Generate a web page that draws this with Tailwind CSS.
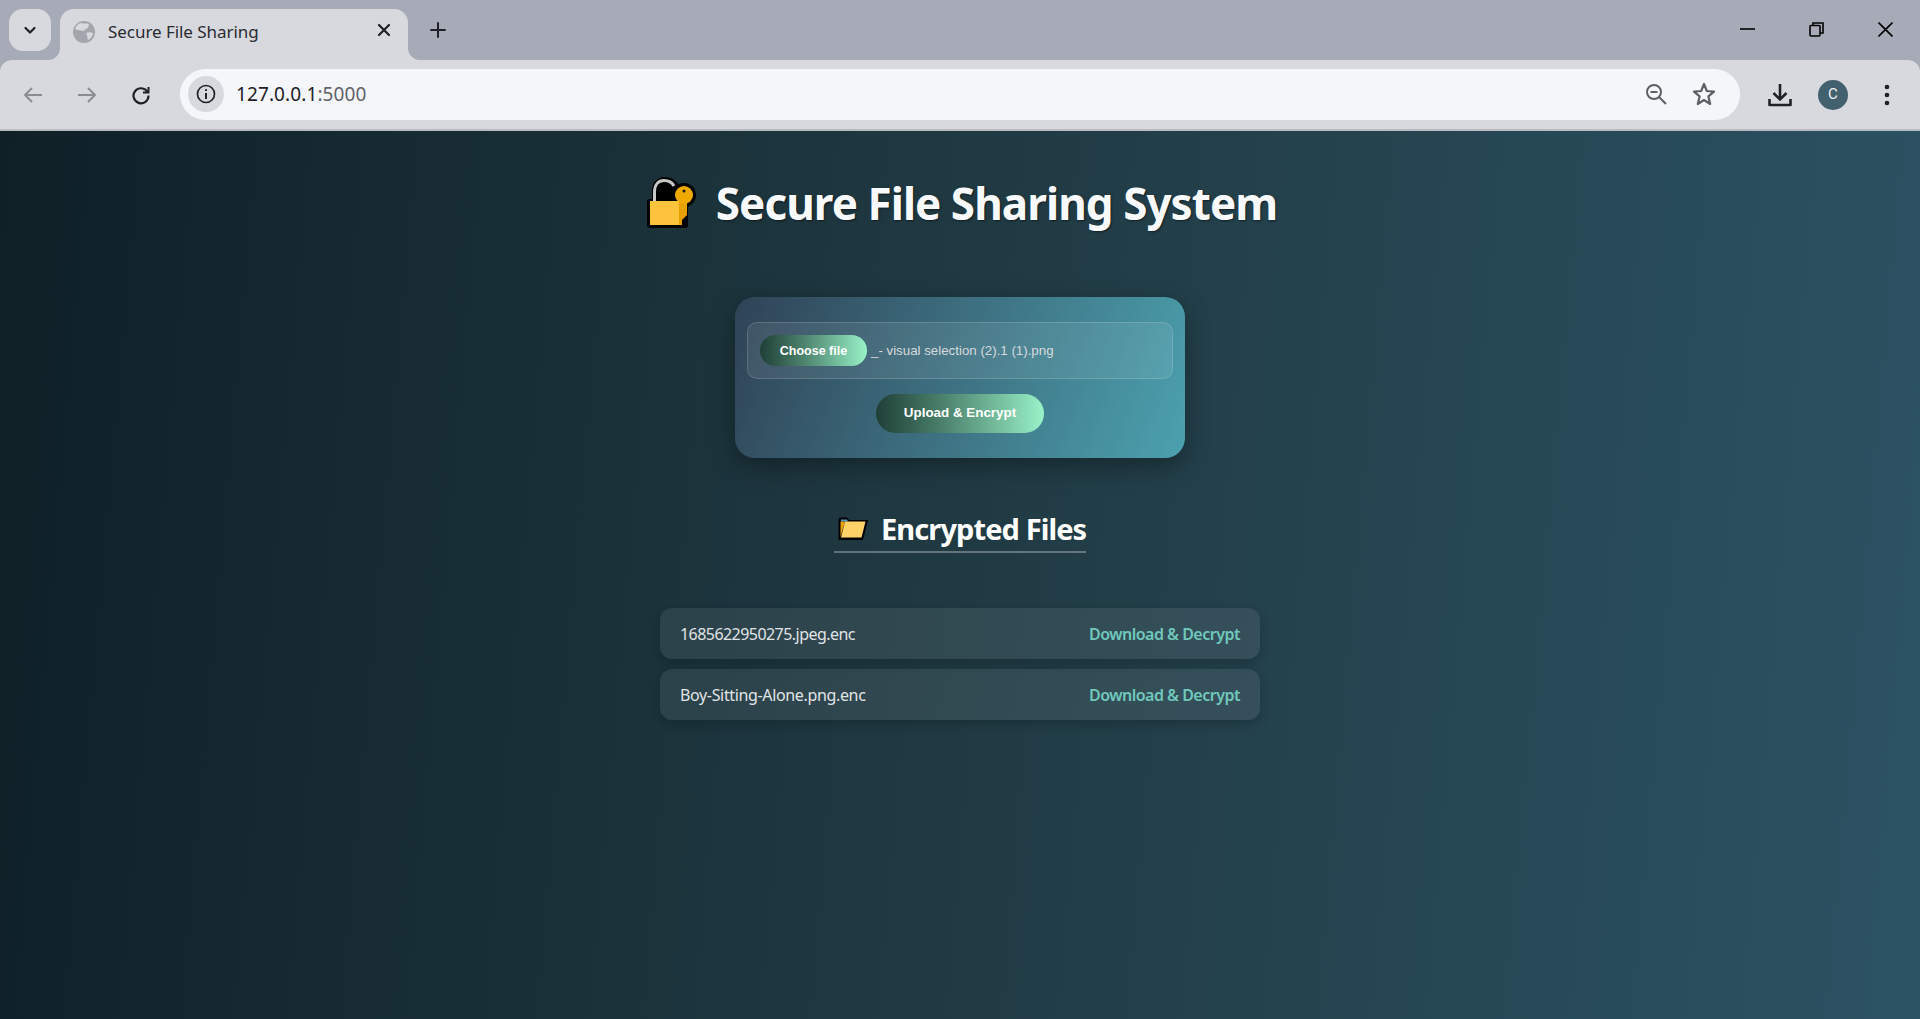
<!DOCTYPE html>
<html lang="en">
<head>
<meta charset="UTF-8">
<title>Secure File Sharing</title>
<script src="https://cdn.jsdelivr.net/npm/@tailwindcss/browser@4"></script>
</head>
<body class="h-[1019px] w-[1920px] overflow-hidden flex flex-col font-['Noto_Sans',sans-serif]">

<!-- TAB STRIP -->
<div class="h-[60px] bg-[#a7abb7] flex items-start pt-[9px] pl-[9px] relative">
  <div class="w-[42px] h-[42px] rounded-[14px] bg-[#d8d9de] flex items-center justify-center">
    <svg width="16" height="16" viewBox="0 0 16 16" fill="none" stroke="#1f2126" stroke-width="2.2" stroke-linecap="round" stroke-linejoin="round"><path d="M3.5 6 L8 10.5 L12.5 6"/></svg>
  </div>
  <div class="relative ml-[9px] w-[348px] h-[51px] bg-[#d8d9de] rounded-t-[14px] flex items-center pl-[13px] pb-[5px]">
    <svg class="absolute left-[-12px] bottom-0" width="12" height="12" viewBox="0 0 12 12"><path d="M12 0 V12 H0 A12 12 0 0 0 12 0Z" fill="#d8d9de"/></svg>
    <svg class="absolute right-[-12px] bottom-0" width="12" height="12" viewBox="0 0 12 12"><path d="M0 0 V12 H12 A12 12 0 0 1 0 0Z" fill="#d8d9de"/></svg>
    <svg width="22" height="22" viewBox="0 0 22 22"><circle cx="11" cy="11" r="11" fill="#a3a6ad"/><path d="M7 2 C10 3 14 2 16 3 L15 7 C13 8 12 8 11 10 C9 10 7 9 5 9 L2 8 C3 5 5 3 7 2Z M13 12 C15 11 18 11 20 12 C20 15 17 18 15 19 C14 17 15 15 13 12Z" fill="#d8d9de"/></svg>
    <span class="ml-[13px] text-[17px] text-[#2a2c31] tracking-[-0.05px]">Secure File Sharing</span>
    <svg class="absolute left-[316px] top-[13px]" width="16" height="16" viewBox="0 0 16 16" stroke="#1f2126" stroke-width="2.2" stroke-linecap="round"><path d="M3 3 L13 13 M13 3 L3 13"/></svg>
  </div>
  <svg class="ml-[21px] mt-[12px]" width="18" height="18" viewBox="0 0 18 18" stroke="#1f2126" stroke-width="2" stroke-linecap="round"><path d="M9 2 V16 M2 9 H16"/></svg>
  <div class="ml-auto flex items-center gap-[54px] pr-[27px] pt-[13px]">
    <svg width="15" height="15" viewBox="0 0 15 15" stroke="#000" stroke-width="1.6"><path d="M0 7 H15"/></svg>
    <svg width="15" height="15" viewBox="0 0 15 15" fill="none" stroke="#000" stroke-width="1.6"><rect x="1" y="3.5" width="10" height="10.5" rx="1"/><path d="M4 3.5 V1 H14 V11 H11"/></svg>
    <svg width="15" height="15" viewBox="0 0 15 15" stroke="#000" stroke-width="1.6"><path d="M0.5 0.5 L14.5 14.5 M14.5 0.5 L0.5 14.5"/></svg>
  </div>
</div>

<!-- TOOLBAR -->
<div class="h-[71px] bg-[#a7abb7] shrink-0">
  <div class="h-[71px] bg-[#d8d9de] rounded-t-[12px] border-b-2 border-[#b9bbc0] flex items-center relative">
    <svg class="ml-[23px]" width="20" height="20" viewBox="0 0 20 20" fill="none" stroke="#8b8d93" stroke-width="2"><path d="M19 10 H2 M9 3 L2 10 L9 17"/></svg>
    <svg class="ml-[34px]" width="20" height="20" viewBox="0 0 20 20" fill="none" stroke="#8b8d93" stroke-width="2"><path d="M1 10 H18 M11 3 L18 10 L11 17"/></svg>
    <svg class="ml-[34px]" width="20" height="20" viewBox="0 0 20 20" fill="none" stroke="#1f2126" stroke-width="2.2"><path d="M16.5 7 A7.5 7.5 0 1 0 17.5 10.5"/><path d="M17.5 2 V7.5 H12" stroke-width="2"/></svg>
    <div class="ml-[29px] w-[1560px] h-[51px] rounded-[26px] bg-[#f5f6f9] flex items-center pl-[8px] mb-[1px]">
      <div class="w-[36px] h-[36px] rounded-full bg-[#d8d9de] flex items-center justify-center">
        <svg width="20" height="20" viewBox="0 0 20 20" fill="none" stroke="#1f2126" stroke-width="1.7"><circle cx="10" cy="10" r="8.5"/><path d="M10 9 V15 M10 5.2 V7" stroke-width="2"/></svg>
      </div>
      <span class="ml-[12px] pt-[1px] text-[19px] text-[#1f2126] tracking-[0.1px]">127.0.0.1<span class="text-[#5f6368]">:5000</span></span>
      <svg class="ml-auto" width="22" height="22" viewBox="0 0 22 22" fill="none" stroke="#5f6065" stroke-width="2"><circle cx="9" cy="9" r="7"/><path d="M5.5 9 H12.5 M14 14 L21 21"/></svg>
      <svg class="ml-[25px] mr-[24px]" width="24" height="24" viewBox="0 0 24 24" fill="none" stroke="#5f6065" stroke-width="2.2" stroke-linejoin="round"><path d="M12 2 L14.8 9 L22 9.6 L16.4 14.4 L18.2 22 L12 18 L5.8 22 L7.6 14.4 L2 9.6 L9.2 9Z"/></svg>
    </div>
    <svg class="ml-[28px]" width="24" height="24" viewBox="0 0 24 24" fill="none" stroke="#1f2126" stroke-width="2.6"><path d="M12 1 V16 M5.5 10 L12 16.5 L18.5 10"/><path d="M1.5 16 V22 H22.5 V16" stroke-linejoin="round"/></svg>
    <div class="ml-[26px] w-[30px] h-[30px] rounded-full bg-[#42606e] text-[#eef1f3] text-[15px] flex items-center justify-center font-['Roboto',sans-serif]">C</div>
    <svg class="ml-[36px]" width="6" height="24" viewBox="0 0 6 24" fill="#1f2126"><circle cx="3" cy="4" r="2.3"/><circle cx="3" cy="12" r="2.3"/><circle cx="3" cy="20" r="2.3"/></svg>
  </div>
</div>

<!-- PAGE -->
<main class="flex-1 flex flex-col items-center bg-[linear-gradient(95deg,#0f2027,#203a43,#2c5364)]">
  <h1 class="mt-[40px] ml-[3px] h-[64px] flex items-center text-[44px] tracking-[-0.95px] font-bold text-[#f8f9fa] whitespace-nowrap [text-shadow:1px_1px_2px_rgba(0,0,0,0.5)]">
    <svg class="mr-[20px] shrink-0" width="50" height="52" viewBox="0 0 50 52">
      <path d="M7 26 V14 C7 5 13 1 18 1 C24 1 29 4 32 8 H38 V26Z" fill="#000" stroke="#000" stroke-width="2" stroke-linejoin="round"/>
      <rect x="1" y="22" width="41" height="29" rx="3" fill="#000"/>
      <circle cx="38" cy="18" r="12" fill="#000"/>
      <path d="M8.5 24 V15 C8.5 7 13 3.5 18 3.5 C22 3.5 26 5 28 9" fill="none" stroke="#c8c8c8" stroke-width="3"/>
      <rect x="4" y="24" width="32" height="24" fill="#fdc33c"/>
      <path d="M33 18 H41 V38 L36 43 V48 H33Z" fill="#e6a100"/>
      <circle cx="38" cy="18" r="9" fill="#eeaa00"/>
      <circle cx="38" cy="14" r="1.5" fill="#1a1a1a"/>
    </svg>
    <span>Secure File Sharing System</span>
  </h1>

  <form class="mt-[62px] w-[450px] h-[161px] rounded-[20px] bg-[linear-gradient(110deg,#2f4356,#4ca1af)] shadow-[0_8px_24px_rgba(0,0,0,0.35)] flex flex-col items-center pt-[25px] font-['Liberation_Sans',sans-serif]">
    <div class="w-[426px] h-[57px] rounded-[10px] border border-white/15 bg-white/8 flex items-center pl-[12px]">
      <span class="w-[107px] h-[31px] pt-[1px] rounded-[16px] bg-linear-to-r from-[#1f4037] to-[#99f2c8] text-white text-[12.5px] font-bold flex items-center justify-center">Choose file</span>
      <span class="ml-[4px] text-[13.3px] text-[#d6dadd]">_- visual selection (2).1 (1).png</span>
    </div>
    <button type="button" class="mt-[15px] w-[168px] h-[39px] rounded-[20px] bg-linear-to-r from-[#1f4037] to-[#99f2c8] text-white text-[13.4px] font-bold flex items-center justify-center">Upload &amp; Encrypt</button>
  </form>

  <h2 class="mt-[48px] w-[252px] h-[47px] border-b-2 border-white/30 flex items-center text-[29px] tracking-[-0.9px] font-bold text-white whitespace-nowrap">
    <svg class="ml-[4px] mr-[13px] shrink-0" width="30" height="23" viewBox="0 0 30 23">
      <path d="M0.5 3 C0.5 1 2 0.5 3 0.5 H9 L11 3 H30 L25 23 H0.5Z" fill="#000"/>
      <path d="M3 2.5 H9 L10 4.5 H3Z" fill="#4a9bd4"/>
      <path d="M2.5 4.5 H7 L2.5 20Z" fill="#e8a000"/>
      <path d="M7 4.5 H27.5 L23.5 20.5 H3Z" fill="#ffd268"/>
    </svg>
    <span>Encrypted Files</span>
  </h2>

  <ul class="mt-[55px] w-[600px] flex flex-col gap-[10px] text-[16px]">
    <li class="h-[51px] rounded-[12px] bg-white/8 shadow-[0_4px_12px_rgba(0,0,0,0.2)] flex items-center justify-between px-[20px] text-[#e0e4e6]">
      <span class="tracking-[-0.55px]">1685622950275.jpeg.enc</span>
      <a class="font-semibold text-[#70c8bc] tracking-[-0.5px]">Download &amp; Decrypt</a>
    </li>
    <li class="h-[51px] rounded-[12px] bg-white/8 shadow-[0_4px_12px_rgba(0,0,0,0.2)] flex items-center justify-between px-[20px] text-[#e0e4e6]">
      <span class="tracking-[-0.35px]">Boy-Sitting-Alone.png.enc</span>
      <a class="font-semibold text-[#70c8bc] tracking-[-0.5px]">Download &amp; Decrypt</a>
    </li>
  </ul>
</main>
</body>
</html>
